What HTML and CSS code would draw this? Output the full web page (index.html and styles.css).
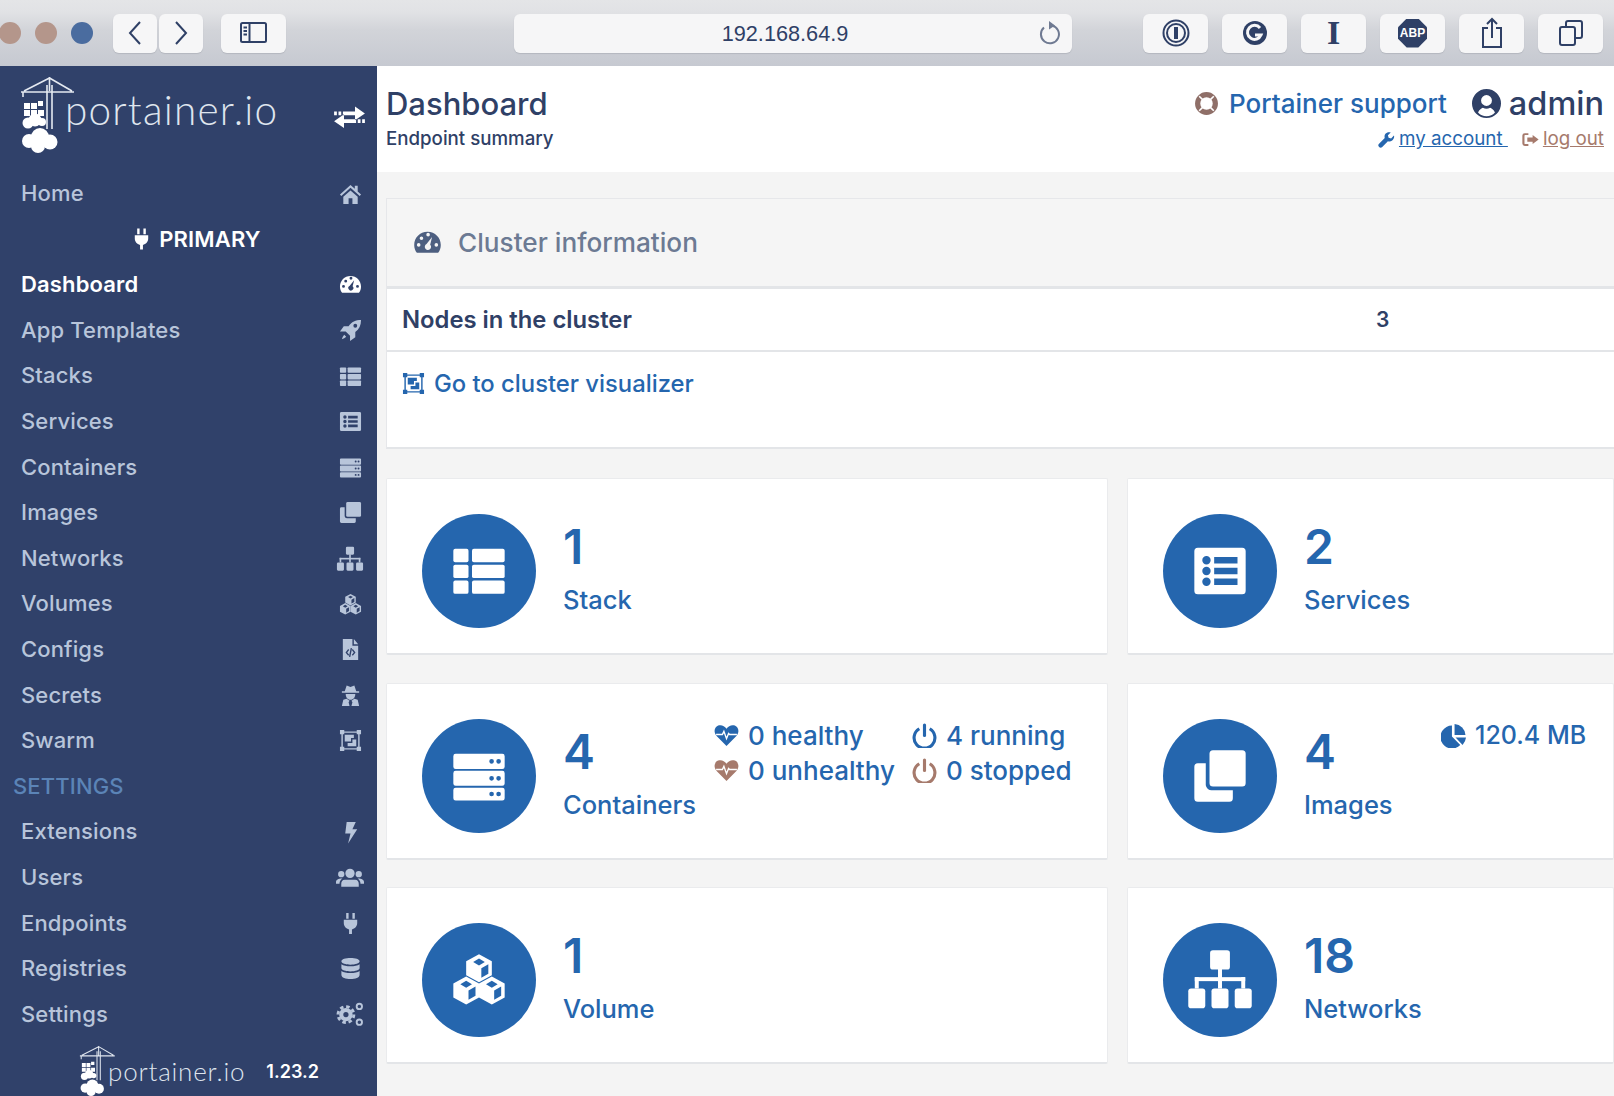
FILE: index.html
```html
<!DOCTYPE html>
<html lang="en">
<head>
    <meta charset="UTF-8">
    <title>Portainer</title>
    <link rel="stylesheet" href="styles.css">
</head>
<body>
    <!-- Icon sprite -->
    <svg class="sprite" xmlns="http://www.w3.org/2000/svg">
        <symbol id="i-home" viewBox="0 0 24 24"><path d="M12 3 1 13l1.4 1.500L12 6l9.600 8.500L23 13l-3.500-3.200V4h-3v3zM4.500 15.500V23H10v-6h4v6h5.500v-7.500L12 8.800z"/></symbol>
        <symbol id="i-tach" viewBox="0 0 24 24"><path fill-rule="evenodd" d="M12 3C5.700 3 1 7.900 1 14c0 2.500.8 4.800 2.200 6.500h17.600C22.200 18.800 23 16.500 23 14 23 7.900 18.300 3 12 3zM11 5.500a1.500 1.500 0 1 0 3 0a1.500 1.500 0 1 0-3 0zM5.500 8.500a1.500 1.500 0 1 0 3 0a1.500 1.500 0 1 0-3 0zM3.200 14a1.500 1.500 0 1 0 3 0a1.500 1.500 0 1 0-3 0zM17.800 14a1.500 1.500 0 1 0 3 0a1.500 1.500 0 1 0-3 0zM15.800 7.500 11.200 13.300a2.600 2.600 0 1 0 3 .5z"/></symbol>
        <symbol id="i-rocket" viewBox="0 0 24 24"><path fill-rule="evenodd" d="M23 1c-5.500 0-10 2-13 6.500H5L1 13h6l4.500 4.500V23l5.500-4v-5.500C21 10.500 23 6.500 23 1zM15 7a2 2 0 1 0 4 0a2 2 0 1 0-4 0zM5.500 16.500c-1.200 1-2 3-2.500 4.500 1.500-.3 3.500-1.300 4.500-2.500z"/></symbol>
        <symbol id="i-stack" viewBox="0 0 24 24"><rect x="1" y="2.500" width="6.500" height="5.700" rx=".8"/><rect x="9" y="2.500" width="14" height="5.700" rx=".8"/><rect x="1" y="9.300" width="6.500" height="5.700" rx=".8"/><rect x="9" y="9.300" width="14" height="5.700" rx=".8"/><rect x="1" y="16.100" width="6.500" height="5.700" rx=".8"/><rect x="9" y="16.100" width="14" height="5.700" rx=".8"/></symbol>
        <symbol id="i-list" viewBox="0 0 24 24"><path fill-rule="evenodd" d="M2.500 2h19A1.500 1.500 0 0 1 23 3.500v17a1.500 1.500 0 0 1-1.500 1.500h-19A1.500 1.500 0 0 1 1 20.500v-17A1.500 1.500 0 0 1 2.500 2zM4.400 7.400a1.800 1.800 0 1 0 3.600 0a1.800 1.800 0 1 0-3.600 0zM4.400 12a1.800 1.800 0 1 0 3.600 0a1.800 1.800 0 1 0-3.600 0zM4.400 16.600a1.800 1.800 0 1 0 3.600 0a1.800 1.800 0 1 0-3.600 0zM9.500 6h10v2.800h-10zM9.500 10.600h10v2.800h-10zM9.500 15.200h10v2.800h-10z"/></symbol>
        <symbol id="i-server" viewBox="0 0 24 24"><path fill-rule="evenodd" d="M2 2.500h20a1 1 0 0 1 1 1V8a1 1 0 0 1-1 1H2a1 1 0 0 1-1-1V3.500a1 1 0 0 1 1-1zM16.400 5.700a1 1 0 1 0 2 0a1 1 0 1 0-2 0zM19.400 5.700a1 1 0 1 0 2 0a1 1 0 1 0-2 0zM2 9.800h20a1 1 0 0 1 1 1v4.400a1 1 0 0 1-1 1H2a1 1 0 0 1-1-1v-4.400a1 1 0 0 1 1-1zM16.400 13a1 1 0 1 0 2 0a1 1 0 1 0-2 0zM19.400 13a1 1 0 1 0 2 0a1 1 0 1 0-2 0zM2 17h20a1 1 0 0 1 1 1v3.500a1 1 0 0 1-1 1H2a1 1 0 0 1-1-1V18a1 1 0 0 1 1-1zM16.400 19.700a1 1 0 1 0 2 0a1 1 0 1 0-2 0zM19.400 19.700a1 1 0 1 0 2 0a1 1 0 1 0-2 0z"/></symbol>
        <symbol id="i-clone" viewBox="0 0 24 24"><path d="M9 1h12.500A1.500 1.500 0 0 1 23 2.500V15a1.500 1.500 0 0 1-1.500 1.500H9A1.500 1.500 0 0 1 7.500 15V2.500A1.500 1.500 0 0 1 9 1z"/><path d="M5.900 6.500V16A2.500 2.500 0 0 0 8.500 18.100h9v3.400A1.500 1.500 0 0 1 16 23H2.500A1.500 1.500 0 0 1 1 21.500V8a1.500 1.500 0 0 1 1.500-1.500z"/></symbol>
        <symbol id="i-sitemap" viewBox="0 0 24 24"><rect x="8.500" y="1.500" width="7" height="6.800" rx="1"/><rect x="11.300" y="8" width="1.400" height="7"/><rect x="3.100" y="11" width="17.800" height="1.400"/><rect x="3.100" y="11" width="1.400" height="4"/><rect x="19.500" y="11" width="1.400" height="4"/><rect x=".8" y="15" width="6" height="7" rx="1"/><rect x="9" y="15" width="6" height="7" rx="1"/><rect x="17.200" y="15" width="6" height="7" rx="1"/></symbol>
        <symbol id="i-cubes" viewBox="0 0 24 24">
            <path fill-rule="evenodd" d="M12 1l5.500 3v6L12 13l-5.500-3V4zM12 2.800 9.500 4.300 12 5.800l2.500-1.500zM13 7v4l3-1.700V5.300z"/>
            <path fill-rule="evenodd" transform="translate(-5.500 9.500)" d="M12 1l5.500 3v6L12 13l-5.500-3V4zM12 2.800 9.500 4.300 12 5.800l2.500-1.500zM13 7v4l3-1.700V5.300z"/>
            <path fill-rule="evenodd" transform="translate(5.500 9.500)" d="M12 1l5.500 3v6L12 13l-5.500-3V4zM12 2.800 9.500 4.300 12 5.800l2.500-1.500zM13 7v4l3-1.700V5.300z"/>
        </symbol>
        <symbol id="i-file" viewBox="0 0 24 24"><path fill-rule="evenodd" d="M4 1h10v7h6v15H4zM15.500 1 20 6.500h-4.500zM9.600 11.500 6.800 15l2.800 3.500 1-.9L8.600 15l2-2.600zM14.400 11.500l-1 .9 2 2.600-2 2.600 1 .9 2.800-3.500zM12.200 10.500l-1.800 9 1.400.3 1.800-9z"/></symbol>
        <symbol id="i-secret" viewBox="0 0 24 24"><path fill-rule="evenodd" d="M8 1.500 12 3l4-1.500 2 6h3v1.500H3V7.500h3zM7 10.500h10c0 3.500-2 6-5 6s-5-2.500-5-6zM4.500 16.500l3.500-1 3 2-1 1.500 1 4H3zM19.500 16.500l-3.500-1-3 2 1 1.500-1 4h8z"/></symbol>
        <symbol id="i-swarm" viewBox="0 0 24 24"><path fill-rule="evenodd" d="M1 1h4.500v1.500h13V1H23v4.500h-1.500v13H23V23h-4.500v-1.500h-13V23H1v-4.500h1.500v-13H1zM4 5.500v13h1.500V20h13v-1.500H20v-13h-1.500V4h-13v1.500zM6 6h9.500v3.500h-3V13H6zM14 11h4v7H9v-3.500h5z"/></symbol>
        <symbol id="i-bolt" viewBox="0 0 24 24"><path d="M8 1h9.500l-3.500 7.500h5L9.500 23.500l2.500-10.500H6.500z"/></symbol>
        <symbol id="i-users" viewBox="0 0 24 24"><path d="M12 4a4 4 0 1 1 0 8 4 4 0 0 1 0-8zM4.500 6a2.700 2.700 0 1 1 0 5.400 2.700 2.700 0 0 1 0-5.400zM19.500 6a2.700 2.700 0 1 1 0 5.400 2.700 2.700 0 0 1 0-5.400zM7.500 13.500h9c2 0 3 1.500 3 3.500v2.500h-15V17c0-2 1-3.500 3-3.500zM4.800 12.500h.7C4 13.500 3 15 3 17H0v-1.500c0-1.800 2-3 4.800-3zM19.200 12.500h-.7C20 13.500 21 15 21 17h3v-1.500c0-1.800-2-3-4.800-3z"/></symbol>
        <symbol id="i-plug" viewBox="0 0 24 24"><path d="M7.500 1H10v6H7.500zM14 1h2.500v6H14zM5 8h14v3.500c0 3.500-2.500 6-5.500 6.700V23h-3v-4.800C7.500 17.500 5 15 5 11.500z"/></symbol>
        <symbol id="i-db" viewBox="0 0 24 24"><path d="M12 1c5 0 9.500 1.200 9.500 3.500S17 8 12 8 2.500 6.800 2.500 4.500 7 1 12 1zM2.500 7.500C4.500 9 8 9.700 12 9.700s7.500-.7 9.500-2.200v4c0 2.300-4.500 3.500-9.500 3.500S2.500 13.800 2.500 11.500zM2.500 14.500c2 1.500 5.500 2.200 9.500 2.200s7.500-.7 9.500-2.200v4C21.500 21.800 17 23 12 23S2.500 21.800 2.500 18.500z"/></symbol>
        <symbol id="i-cogs" viewBox="0 0 24 24" fill="none" stroke="currentColor">
            <circle cx="8.500" cy="12.500" r="4" stroke-width="3.500"/>
            <circle cx="8.500" cy="12.500" r="6.800" stroke-width="2.500" stroke-dasharray="3 2.340"/>
            <circle cx="20" cy="5.500" r="2.300" stroke-width="1.600"/>
            <circle cx="20" cy="19" r="2.300" stroke-width="1.600"/>
        </symbol>
        <symbol id="i-exchange" viewBox="0 0 30 24"><path d="M1 7h2.500v3.500H1zM5 7h2.500v3.500H5zM9 7h11V2.500l9 6.300-9 6.200v-4.500H9zM29 14h-2.500v3.500H29zM25 14h-2.500v3.500H25zM21 14H10V9.500L1 15.800l9 6.200v-4.500h11z"/></symbol>
        <symbol id="i-ring" viewBox="0 0 24 24" fill="none" stroke="currentColor">
            <circle cx="12" cy="12" r="8.500" stroke-width="5"/>
            <path stroke="#fff" stroke-width="1.500" d="M5 5l4 4M19 5l-4 4M5 19l4-4M19 19l-4-4"/>
        </symbol>
        <symbol id="i-user" viewBox="0 0 24 24"><path fill-rule="evenodd" d="M12 0a12 12 0 1 1 0 24a12 12 0 0 1 0-24zM7.500 9.500a4.500 4.500 0 1 0 9 0a4.500 4.500 0 1 0-9 0zM5 19.500A9.500 9.500 0 0 0 19 19.500C18 17 16 15.800 15 15.500c-2 1.200-4 1.200-6 0C8 15.800 6 17 5 19.500z"/></symbol>
        <symbol id="i-wrench" viewBox="0 0 24 24"><path d="M22.500 6.500l-4 4-3.500-1-1-3.500 4-4c-3-1-6 0-7.500 2C9 6 9 8 9.500 10L1.500 18a3 3 0 0 0 4.500 4.500l8-8c2 .5 4 .5 6-1 2-1.500 3.500-4.500 2.500-7z"/></symbol>
        <symbol id="i-signout" viewBox="0 0 24 24"><path d="M9 3v2.500H4.500a1 1 0 0 0-1 1v11a1 1 0 0 0 1 1H9V21H4a3.500 3.500 0 0 1-3.500-3.500v-11A3.500 3.500 0 0 1 4 3zM15 5.500l8.500 6.500-8.500 6.500V15H7.500V9H15z"/></symbol>
        <symbol id="i-heart" viewBox="0 0 24 24">
            <path d="M12 22 2.500 12.500C-.5 9.500 0 4 4 2.500c3-1 6 .2 8 3 2-2.800 5-4 8-3 4 1.500 4.500 7 1.500 10z"/>
            <path fill="none" stroke="#fff" stroke-width="1.300" d="M2 11h6l1.500-3 2.500 7 2-5 1 1h7"/>
        </symbol>
        <symbol id="i-power" viewBox="0 0 24 24" fill="none" stroke="currentColor" stroke-width="3">
            <path d="M7 5.500a10 10 0 1 0 10 0"/>
            <path stroke-linecap="round" d="M12 2v10"/>
        </symbol>
        <symbol id="i-pie" viewBox="0 0 24 24"><path d="M10.500 2.500V13l8 8a11 11 0 1 1-8-18.500z"/><path d="M13 1a11 11 0 0 1 10.500 10.500H13z"/><path d="M14 14h10a11 11 0 0 1-3.300 7z"/></symbol>
        <symbol id="i-crane" viewBox="0 0 54 76">
            <g fill="none" stroke="currentColor" stroke-width="1.600">
                <path d="M27 52V8M32 52V8M29.500 0v14M1 15h53M29.500 1 4 14M29.500 1 52 14M3 15v5"/>
            </g>
            <path d="M4 26h6v6H4zM11 26h6v6h-6zM4 33h6v6H4zM11 33h6v6h-6zM18 33h6v6h-6zM18 24h5v5h-5z"/>
            <circle cx="8" cy="46" r="5.500"/><circle cx="15" cy="43" r="6.500"/><circle cx="22" cy="45" r="4"/>
            <circle cx="9" cy="64" r="7"/><circle cx="20" cy="60" r="9"/><circle cx="30" cy="65" r="7.500"/><circle cx="18" cy="69" r="7"/>
        </symbol>
    </svg>

    <!-- Browser toolbar -->
    <div class="toolbar">
        <div class="lights">
            <span class="light"></span>
            <span class="light"></span>
            <span class="light light-blue"></span>
        </div>
        <div class="nav-pair">
            <button class="tool-btn tool-nav"><svg width="16" height="26" viewBox="0 0 16 26"><path d="M13 2 3 13l10 11"/></svg></button>
            <button class="tool-btn tool-nav"><svg width="16" height="26" viewBox="0 0 16 26"><path d="M3 2l10 11L3 24"/></svg></button>
        </div>
        <button class="tool-btn tool-side"><svg width="28" height="22" viewBox="0 0 28 22"><rect x="1" y="1" width="25" height="19" rx="1.500"/><path d="M9.500 1v19M3.500 5.500h3.500M3.500 9h3.500M3.500 12.500h3.500"/></svg></button>
        <div class="url-bar">
            <span class="url-text">192.168.64.9</span>
            <svg class="reload" width="22" height="26" viewBox="0 0 22 26"><path d="M14 5.500a9 9 0 1 1-8 2"/><path class="solid" d="M11 1l6 4.500-6 4z"/></svg>
        </div>
        <div class="ext-row">
            <button class="tool-btn tool-ext"><svg width="28" height="28" viewBox="0 0 28 28"><circle cx="14" cy="14" r="12.500"/><circle cx="14" cy="14" r="9"/><path class="thick" d="M14 8v12"/></svg></button>
            <button class="tool-btn tool-ext"><svg width="26" height="26" viewBox="0 0 26 26"><circle class="solid" cx="13" cy="13" r="12"/><path class="white" d="M18 8a7 7 0 1 0 1 7h-6"/></svg></button>
            <button class="tool-btn tool-ext ext-serif">I</button>
            <button class="tool-btn tool-ext"><span class="abp">ABP</span></button>
            <button class="tool-btn tool-ext"><svg width="22" height="32" viewBox="0 0 22 32"><path d="M7 11H2v19h18V11h-5M11 21V2M6 7l5-5 5 5"/></svg></button>
            <button class="tool-btn tool-ext"><svg width="24" height="26" viewBox="0 0 24 26"><path d="M7 6V3a2 2 0 0 1 2-2h12a2 2 0 0 1 2 2v13a2 2 0 0 1-2 2h-4"/><rect x="1" y="7" width="15" height="18" rx="2"/></svg></button>
        </div>
    </div>

    <div class="layout">
        <!-- Sidebar -->
        <aside class="sidebar">
            <div class="brand">
                <svg class="crane"><use href="#i-crane"/></svg>
                <span class="brand-name">portainer.io</span>
                <svg class="swap"><use href="#i-exchange"/></svg>
            </div>
            <ul class="menu">
                <li><a>Home <svg class="ico"><use href="#i-home"/></svg></a></li>
                <li class="endpoint"><svg class="ico-plug"><use href="#i-plug"/></svg> PRIMARY</li>
                <li class="active"><a>Dashboard <svg class="ico"><use href="#i-tach"/></svg></a></li>
                <li><a>App Templates <svg class="ico"><use href="#i-rocket"/></svg></a></li>
                <li><a>Stacks <svg class="ico"><use href="#i-stack"/></svg></a></li>
                <li><a>Services <svg class="ico"><use href="#i-list"/></svg></a></li>
                <li><a>Containers <svg class="ico"><use href="#i-server"/></svg></a></li>
                <li><a>Images <svg class="ico"><use href="#i-clone"/></svg></a></li>
                <li><a>Networks <svg class="ico ico-wide"><use href="#i-sitemap"/></svg></a></li>
                <li><a>Volumes <svg class="ico"><use href="#i-cubes"/></svg></a></li>
                <li><a>Configs <svg class="ico"><use href="#i-file"/></svg></a></li>
                <li><a>Secrets <svg class="ico"><use href="#i-secret"/></svg></a></li>
                <li><a>Swarm <svg class="ico"><use href="#i-swarm"/></svg></a></li>
                <li class="menu-title">SETTINGS</li>
                <li><a>Extensions <svg class="ico"><use href="#i-bolt"/></svg></a></li>
                <li><a>Users <svg class="ico ico-wide"><use href="#i-users"/></svg></a></li>
                <li><a>Endpoints <svg class="ico"><use href="#i-plug"/></svg></a></li>
                <li><a>Registries <svg class="ico"><use href="#i-db"/></svg></a></li>
                <li><a>Settings <svg class="ico ico-wide"><use href="#i-cogs"/></svg></a></li>
            </ul>
            <div class="side-footer">
                <svg class="crane-small"><use href="#i-crane"/></svg>
                <span class="footer-name">portainer.io</span>
                <span class="version">1.23.2</span>
            </div>
        </aside>

        <main class="main">
            <!-- Page header -->
            <header class="page-head">
                <div>
                    <h1>Dashboard</h1>
                    <p class="subtitle">Endpoint summary</p>
                </div>
                <div class="head-right">
                    <div class="head-top">
                        <span class="support"><svg class="ico-ring"><use href="#i-ring"/></svg> Portainer support</span>
                        <span class="admin"><svg class="ico-user"><use href="#i-user"/></svg> admin</span>
                    </div>
                    <div class="head-links">
                        <svg class="ico-small link-blue"><use href="#i-wrench"/></svg><a class="link-blue">my account </a>
                        <svg class="ico-small link-brown"><use href="#i-signout"/></svg><a class="link-brown">log out</a>
                    </div>
                </div>
            </header>

            <div class="content">
                <!-- Cluster panel -->
                <section class="panel">
                    <div class="panel-head">
                        <svg class="ico-panel"><use href="#i-tach"/></svg>
                        Cluster information
                    </div>
                    <div class="panel-row">
                        <span class="row-label">Nodes in the cluster</span>
                        <span class="row-value">3</span>
                    </div>
                    <div class="panel-link">
                        <svg class="ico-link"><use href="#i-swarm"/></svg>
                        Go to cluster visualizer
                    </div>
                </section>

                <!-- Summary cards -->
                <div class="cards">
                    <div class="card">
                        <div class="circle"><svg class="circle-ico"><use href="#i-stack"/></svg></div>
                        <div class="card-text">
                            <div class="num">1</div>
                            <div class="label">Stack</div>
                        </div>
                    </div>
                    <div class="card">
                        <div class="circle"><svg class="circle-ico"><use href="#i-list"/></svg></div>
                        <div class="card-text">
                            <div class="num">2</div>
                            <div class="label">Services</div>
                        </div>
                    </div>
                    <div class="card">
                        <div class="circle"><svg class="circle-ico"><use href="#i-server"/></svg></div>
                        <div class="card-text text-containers">
                            <div class="num">4</div>
                            <div class="label">Containers</div>
                        </div>
                        <div class="details details-two">
                            <span class="stat"><svg class="ico-stat"><use href="#i-heart"/></svg>0 healthy</span>
                            <span class="stat"><svg class="ico-stat"><use href="#i-power"/></svg>4 running</span>
                            <span class="stat"><svg class="ico-stat brown"><use href="#i-heart"/></svg>0 unhealthy</span>
                            <span class="stat"><svg class="ico-stat brown"><use href="#i-power"/></svg>0 stopped</span>
                        </div>
                    </div>
                    <div class="card">
                        <div class="circle"><svg class="circle-ico"><use href="#i-clone"/></svg></div>
                        <div class="card-text text-images">
                            <div class="num">4</div>
                            <div class="label">Images</div>
                        </div>
                        <div class="details">
                            <span class="stat stat-size"><svg class="ico-stat"><use href="#i-pie"/></svg>120.4 MB</span>
                        </div>
                    </div>
                    <div class="card">
                        <div class="circle"><svg class="circle-ico"><use href="#i-cubes"/></svg></div>
                        <div class="card-text">
                            <div class="num">1</div>
                            <div class="label">Volume</div>
                        </div>
                    </div>
                    <div class="card">
                        <div class="circle"><svg class="circle-ico circle-ico-wide"><use href="#i-sitemap"/></svg></div>
                        <div class="card-text">
                            <div class="num">18</div>
                            <div class="label">Networks</div>
                        </div>
                    </div>
                </div>
            </div>
        </main>
    </div>
</body>
</html>
```

FILE: styles.css
```css
/* Reset */
* {
    margin: 0;
    padding: 0;
    box-sizing: border-box;
}

html, body {
    height: 1096px;
    overflow: hidden;
}

body {
    font-family: Inter, "Open Sans", sans-serif;
    background-color: #f4f4f4;
    color: #2f4066;
}

.sprite {
    position: absolute;
    width: 0;
    height: 0;
}

/* Browser toolbar */
.toolbar {
    display: flex;
    align-items: center;
    height: 66px;
    padding-top: 0;
    background: linear-gradient(#e4e5e7 0, #e1e2e5 12px, #d2d4d9 30px, #c6c9d1 66px);
}

.lights {
    display: flex;
    gap: 14px;
    width: 114px;
    margin-left: -1px;
}

.light {
    width: 22px;
    height: 22px;
    border-radius: 50%;
    background-color: #b4968b;
}

.light-blue {
    background-color: #4a6c9f;
}

.tool-btn {
    display: flex;
    align-items: center;
    justify-content: center;
    height: 39px;
    border: none;
    border-radius: 6px;
    background-color: #f6f6f7;
    box-shadow: 0 1px 1px #b4b7bf;
}

.tool-btn svg {
    fill: none;
    stroke: #2f4066;
    stroke-width: 2;
}

.tool-btn svg .solid {
    fill: #2f4066;
    stroke: none;
}

.tool-btn svg .white {
    stroke: #f6f6f7;
    stroke-width: 3;
}

.tool-btn svg .thick {
    stroke-width: 4;
}

.nav-pair {
    display: flex;
    gap: 2px;
}

.tool-nav {
    width: 44px;
}

.tool-side {
    width: 65px;
    margin-left: 18px;
}

.url-bar {
    position: relative;
    display: flex;
    align-items: center;
    justify-content: center;
    width: 558px;
    height: 39px;
    padding: 1px 16px 0 0;
    margin-left: 228px;
    border-radius: 6px;
    background-color: #f6f6f7;
    box-shadow: 0 1px 1px #b4b7bf;
}

.url-text {
    font-family: "Liberation Sans", Arial, sans-serif;
    font-size: 21.700px;
    color: #2f4066;
}

.reload {
    position: absolute;
    right: 12px;
    top: 6px;
    fill: none;
    stroke: #6f7a92;
    stroke-width: 2;
}

.reload .solid {
    fill: #6f7a92;
    stroke: none;
}

.ext-row {
    display: flex;
    gap: 14px;
    margin-left: 71px;
}

.tool-ext {
    width: 65px;
}

.ext-serif {
    font-family: "Liberation Serif", serif;
    font-size: 34px;
    font-weight: 700;
    color: #2f4066;
}

.abp {
    display: flex;
    align-items: center;
    justify-content: center;
    width: 29px;
    height: 29px;
    font-family: "Liberation Sans", Arial, sans-serif;
    font-size: 12px;
    font-weight: 700;
    color: #fff;
    background-color: #2f4066;
    clip-path: polygon(30% 0, 70% 0, 100% 30%, 100% 70%, 70% 100%, 30% 100%, 0 70%, 0 30%);
}

/* Page layout */
.layout {
    display: flex;
    height: 1030px;
}

.sidebar {
    flex: 0 0 377px;
    background-color: #30416a;
    color: #b8c5da;
}

.brand {
    position: relative;
    display: flex;
    height: 105px;
    padding-left: 20px;
    color: #dfe5ee;
}

.crane {
    width: 54px;
    height: 76px;
    margin-top: 11px;
    fill: #fff;
    color: #e4e9f1;
}

.brand-name {
    margin: 19px 0 0 -9px;
    font-family: Lato, sans-serif;
    font-size: 40.500px;
    font-weight: 300;
    line-height: 50px;
    letter-spacing: 1.200px;
}

.swap {
    position: absolute;
    left: 333px;
    top: 37px;
    width: 33px;
    height: 28px;
    fill: #fff;
}

.menu {
    list-style: none;
    font-size: 22px;
    font-weight: 500;
    letter-spacing: .15px;
}

.menu li {
    height: 45.600px;
    line-height: 45.600px;
}

.menu a {
    display: flex;
    align-items: center;
    justify-content: space-between;
    padding: 0 15px 0 21px;
    height: 100%;
}

.ico {
    width: 23px;
    height: 23px;
    margin-right: .5px;
    fill: currentColor;
}

.ico-wide {
    width: 28px;
    height: 28px;
    margin-right: -2px;
}

.endpoint {
    display: flex;
    align-items: center;
    justify-content: center;
    padding-left: 14px;
    font-weight: 600;
    color: #fff;
}

.ico-plug {
    width: 23px;
    height: 24px;
    margin-right: 6px;
    fill: #fff;
}

.active {
    color: #fff;
    font-weight: 600;
}

.menu-title {
    padding-left: 13px;
    color: #5b84b7;
}

.side-footer {
    display: flex;
    align-items: center;
    height: 58px;
    padding-left: 79px;
    margin-top: 5px;
}

.crane-small {
    width: 36px;
    height: 50px;
    fill: #fff;
    color: #dfe5ee;
}

.footer-name {
    margin-left: -7px;
    font-family: Lato, sans-serif;
    font-size: 26px;
    font-weight: 300;
    letter-spacing: .8px;
    color: #dfe5ee;
}

.version {
    margin-left: 21px;
    font-size: 18px;
    font-weight: 600;
    color: #fff;
}

.main {
    flex: 1;
    min-width: 0;
    overflow: hidden;
}

/* Page header */
.page-head {
    display: flex;
    justify-content: space-between;
    height: 106px;
    padding: 19px 10px 0 9px;
    background-color: #fff;
}

h1 {
    font-size: 31px;
    font-weight: 500;
    line-height: 37px;
}

.subtitle {
    margin-top: 5px;
    font-size: 18.700px;
    font-weight: 500;
    line-height: 24px;
}

.head-right {
    display: flex;
    flex-direction: column;
    align-items: flex-end;
}

.head-top {
    display: flex;
    align-items: center;
    height: 37px;
    font-size: 26px;
    font-weight: 500;
}

.support {
    display: flex;
    align-items: center;
    color: #2566ae;
}

.ico-ring {
    width: 25px;
    height: 25px;
    margin-right: 10px;
    color: #8f6f68;
}

.admin {
    display: flex;
    align-items: center;
    margin-left: 25px;
    font-size: 32.500px;
}

.ico-user {
    width: 29px;
    height: 29px;
    margin-right: 8px;
    fill: #2f4066;
}

.head-links {
    display: flex;
    align-items: center;
    margin-top: 5px;
    font-size: 18.800px;
    line-height: 24px;
}

.head-links a {
    text-decoration: underline;
    white-space: pre;
}

.ico-small {
    width: 17px;
    height: 17px;
    margin: 0 4px 0 14px;
    fill: currentColor;
}

.link-blue {
    color: #2566ae;
}

.link-brown {
    color: #a67a6c;
}

/* Cluster panel */
.content {
    padding: 26px 0 0 9px;
}

.panel {
    height: 251px;
    background-color: #fff;
    border-left: 1px solid #e6e7ea;
    border-bottom: 2px solid #e3e5e8;
    border-top: 1px solid #e6e7ea;
}

.panel-head {
    display: flex;
    align-items: center;
    height: 90px;
    padding-left: 26px;
    font-size: 26.200px;
    font-weight: 500;
    color: #6c7a93;
    background-color: #f5f5f5;
    border-bottom: 3px solid #e3e5e8;
}

.ico-panel {
    width: 29px;
    height: 29px;
    margin-right: 16px;
    fill: #4d5f80;
}

.panel-row {
    display: flex;
    align-items: center;
    height: 63px;
    padding-left: 15px;
    font-size: 23.800px;
    font-weight: 600;
    border-bottom: 2px solid #e3e5e8;
}

.row-label {
    width: 974px;
}

.row-value {
    font-size: 21px;
}

.panel-link {
    display: flex;
    align-items: center;
    height: 62px;
    padding-left: 15px;
    font-size: 23.800px;
    font-weight: 500;
    color: #2566ae;
}

.ico-link {
    width: 23px;
    height: 23px;
    margin-right: 9px;
    fill: currentColor;
}

/* Summary cards */
.cards {
    display: grid;
    grid-template-columns: 722px 1fr;
    grid-auto-rows: 177px;
    column-gap: 19px;
    row-gap: 27.500px;
    margin-top: 29px;
}

.card {
    display: flex;
    padding: 35px 0 0 35px;
    background-color: #fff;
    color: #2566ae;
    border: 1px solid #eaebed;
    border-bottom: 2px solid #e3e5e8;
    border-radius: 2px;
}

.circle {
    display: flex;
    flex: none;
    align-items: center;
    justify-content: center;
    width: 114px;
    height: 114px;
    border-radius: 50%;
    background-color: #2566ae;
}

.circle-ico {
    width: 56px;
    height: 56px;
    fill: #fff;
    color: #fff;
}

.circle-ico-wide {
    width: 68px;
    height: 68px;
}

.card-text {
    margin-left: 27px;
    font-weight: 500;
}

.text-containers {
    width: 151px;
}

.text-images {
    width: 137px;
}

.num {
    margin-top: 8px;
    font-size: 48px;
    font-weight: 600;
    line-height: 50px;
}

.label {
    margin-top: 11px;
    font-size: 25.500px;
    line-height: 34px;
}

.details {
    display: flex;
    flex-direction: column;
    margin-top: -1px;
    font-size: 26px;
    font-weight: 500;
}

.details-two {
    display: grid;
    grid-template-columns: 198px auto;
    grid-auto-rows: 35px;
}

.stat {
    display: flex;
    align-items: center;
    height: 35px;
}

.stat-size {
    font-size: 25px;
}

.ico-stat {
    width: 25px;
    height: 25px;
    margin-right: 9px;
    fill: currentColor;
    color: #2566ae;
}

.ico-stat.brown {
    color: #a67a6c;
}
```
